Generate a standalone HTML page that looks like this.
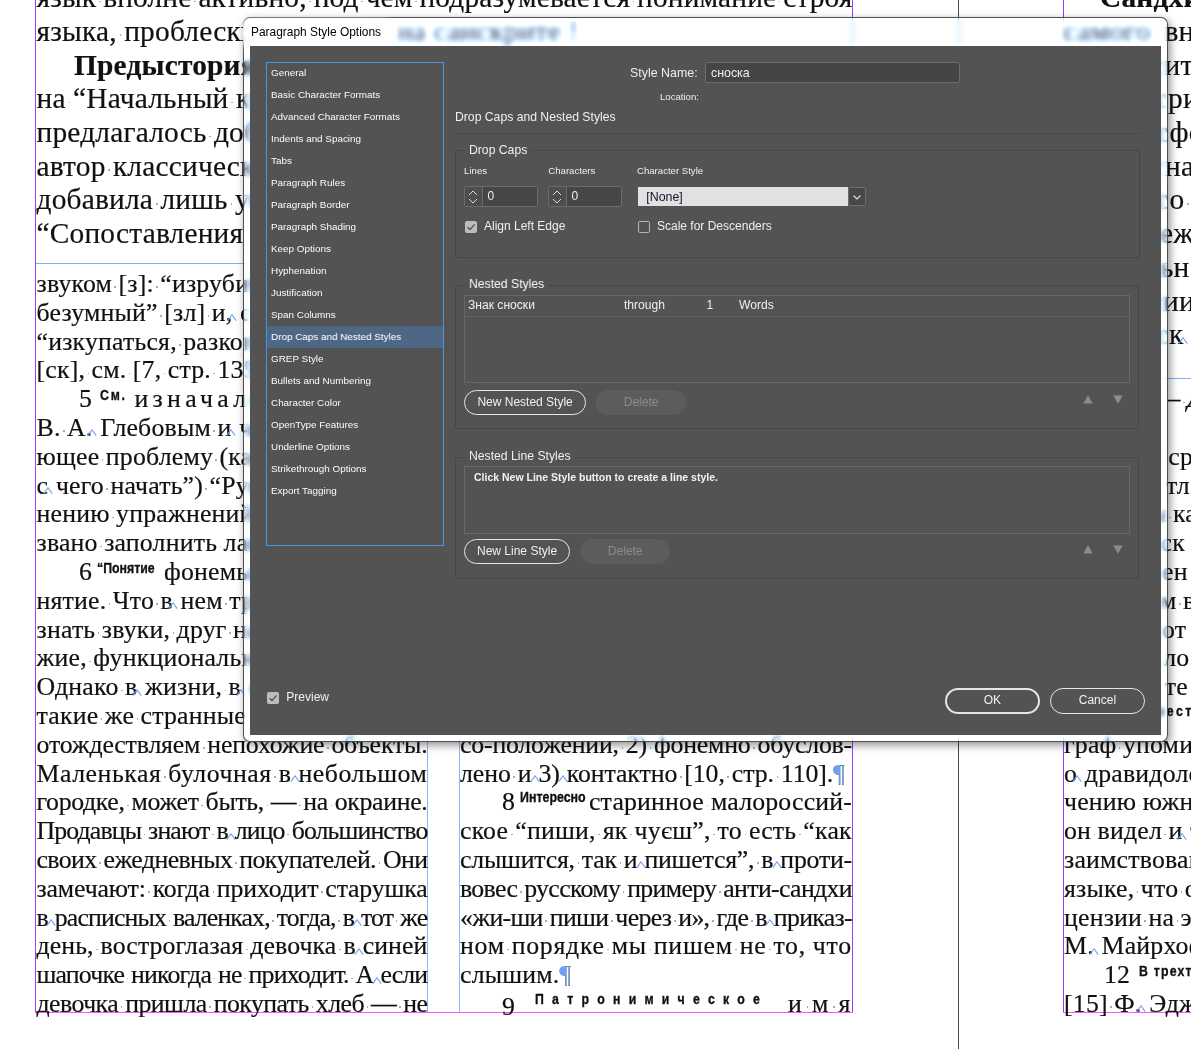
<!DOCTYPE html>
<html><head><meta charset="utf-8"><title>Paragraph Style Options</title>
<style>
html,body{margin:0;padding:0;}
body{width:1191px;height:1049px;overflow:hidden;position:relative;background:#fff;font-family:"Liberation Serif",serif;}
#doc{position:absolute;left:0;top:0;width:1191px;height:1049px;}
.g{position:absolute;}
.t{position:absolute;white-space:nowrap;color:#111;font-family:"Liberation Serif",serif;letter-spacing:0.2px;-webkit-text-stroke:0.2px #111;}
.t b{font-weight:inherit;}
.j{display:flex;justify-content:space-between;}
.t i{display:inline-block;position:relative;font-style:normal;}
.l i{vertical-align:top;height:1em;}
.l i.d{width:0.25em;}
.l i.d::after{left:calc(50% - 0.8px) !important;}
.l i.c{width:0.3em;}
.j i.d,.j i.c{width:0;}
.t i.d::after{content:"";position:absolute;left:-0.8px;top:0.6em;width:1.6px;height:1.6px;background:#86b0f6;}
.t i.c svg{position:absolute;left:-5px;top:0.56em;}
.t u{text-decoration:none;color:#6fa0f5;}
.sup{position:absolute;white-space:nowrap;font-family:"Liberation Sans",sans-serif;font-weight:bold;color:#111;transform-origin:0 0;-webkit-text-stroke:0.35px #111;}
em{font-style:italic;}

/* dialog */
#dlg{position:absolute;left:243px;top:17px;width:925px;height:725px;border-radius:7px;
 background:rgba(255,255,255,0.12);backdrop-filter:blur(3.2px) sepia(0.5) hue-rotate(172deg) contrast(1.05);box-shadow:inset 0 0 0 1px rgba(60,60,60,0.9),2px 3px 9px rgba(0,0,0,0.45);overflow:hidden;}
#glow{position:absolute;left:-10px;top:4px;width:160px;height:24px;background:#fff;filter:blur(5px);border-radius:10px;}
#ttl{position:absolute;left:8px;top:8px;font:11.95px/14px "Liberation Sans",sans-serif;color:#000;white-space:nowrap;}
#in{position:absolute;left:7px;top:29px;width:911px;height:688.5px;background:#535353;font-family:"Liberation Sans",sans-serif;color:#efefef;}
.a{position:absolute;white-space:nowrap;}
#side{position:absolute;left:16px;top:16px;width:178px;height:484px;border:1px solid #4a95e0;box-sizing:border-box;}
#side div{position:absolute;left:4px;height:22px;font-size:9.9px;line-height:22px;color:#fcfcfc;white-space:nowrap;}
#side .sel{left:0;width:176px;background:#4d6784;padding-left:4px;box-sizing:border-box;}
.fld{position:absolute;background:#454545;border:1px solid #6b6b6b;border-radius:2px;box-sizing:border-box;}
.grp{position:absolute;border:1px solid #474747;border-radius:2px;box-sizing:border-box;}
.lgd{position:absolute;background:#535353;padding:0 4px;font-size:12px;line-height:14px;color:#ececec;white-space:nowrap;}
.btn{position:absolute;box-sizing:border-box;border:1.5px solid #e6e6e6;border-radius:13px;font-size:12px;color:#f0f0f0;text-align:center;}
.btn.dis{border:none;background:#5c5c5c;color:#8a8a8a;}
.chk{position:absolute;width:12px;height:12px;border-radius:2px;box-sizing:border-box;}

@supports not ((backdrop-filter: blur(1px)) or (-webkit-backdrop-filter: blur(1px))) { #dlg{background:#fbfdff;} }
.vb{position:absolute;top:3px;width:6px;height:24px;background:rgba(190,232,252,0.3);filter:blur(2px);}

</style></head><body>
<div id="doc">
<div class="g" style="left:35px;top:0;width:1px;height:1013px;background:#9b3cff"></div><div class="g" style="left:852px;top:0;width:1px;height:1013px;background:#9b3cff"></div><div class="g" style="left:958px;top:0;width:1px;height:1049px;background:#4a4a4a"></div><div class="g" style="left:1063px;top:0;width:1px;height:1013px;background:#9b3cff"></div><div class="g" style="left:35px;top:1012px;width:818px;height:1px;background:#ff55ff"></div><div class="g" style="left:1063px;top:1012px;width:128px;height:1px;background:#ff55ff"></div><div class="g" style="left:36px;top:263px;width:816px;height:1px;background:#7fb0f5"></div><div class="g" style="left:427px;top:263px;width:1px;height:749px;background:#8ab8f8"></div><div class="g" style="left:459px;top:263px;width:1px;height:749px;background:#8ab8f8"></div><div class="g" style="left:1064px;top:378px;width:127px;height:1px;background:#7fb0f5"></div><div id="j0" class="t j" style="left:36.5px;top:-17.0px;font-size:29.40px;line-height:29.40px;width:816.0px;letter-spacing:0.138px;"><b>язык</b><i class="d"></i><b>вполне</b><i class="d"></i><b>активно,</b><i class="d"></i><b>под</b><i class="d"></i><b>чем</b><i class="d"></i><b>подразумевается</b><i class="d"></i><b>понимание</b><i class="d"></i><b>строя</b></div>
<div class="t l" style="left:36.5px;top:16.7px;font-size:29.40px;line-height:29.40px;"><b>языка,</b><i class="d"></i><b>проблески</b></div>
<div class="t l" style="left:397.0px;top:16.7px;font-size:29.40px;line-height:29.40px;"><b>на</b><i class="d"></i><b>санскрите</b><i class="d"></i><b>!</b></div>
<div class="t l" style="left:74.0px;top:50.5px;font-size:29.40px;line-height:29.40px;font-weight:bold"><b>Предыстория</b><i class="d"></i><b>вопроса</b></div>
<div class="t l" style="left:36.5px;top:84.2px;font-size:29.40px;line-height:29.40px;"><b>на</b><i class="d"></i><b>“Начальный</b><i class="d"></i><b>курс</b><i class="d"></i><b>фонетики</b><i class="d"></i><b>и</b><i class="d"></i><b>фонологии”</b></div>
<div class="t l" style="left:36.5px;top:117.9px;font-size:29.40px;line-height:29.40px;"><b>предлагалось</b><i class="d"></i><b>добавить</b></div>
<div class="t l" style="left:36.5px;top:151.6px;font-size:29.40px;line-height:29.40px;"><b>автор</b><i class="d"></i><b>классического</b><i class="d"></i><b>курса</b></div>
<div class="t l" style="left:36.5px;top:185.4px;font-size:29.40px;line-height:29.40px;"><b>добавила</b><i class="d"></i><b>лишь</b><i class="d"></i><b>упражнения</b></div>
<div class="t l" style="left:36.5px;top:219.1px;font-size:29.40px;line-height:29.40px;"><b>“Сопоставления</b><i class="d"></i><b>звуков</b></div>
<div class="t l" style="left:36.5px;top:271.0px;font-size:25.80px;line-height:25.80px;"><b>звуком</b><i class="d"></i><b>[з]:</b><i class="d"></i><b>“изрубить”,</b><i class="d"></i><b>“изрезать”</b></div>
<div class="t l" style="left:36.5px;top:299.8px;font-size:25.80px;line-height:25.80px;"><b>безумный”</b><i class="d"></i><b>[зл]</b><i class="d"></i><b>и,</b><i class="c"><svg width="10" height="7" viewBox="0 0 10 7"><path d="M0.8 6.6 L5 0.8 L9.2 6.6" fill="none" stroke="#6fa0f5" stroke-width="1.1"/></svg></i><b>с</b><i class="d"></i><b>другой</b><i class="d"></i><b>стороны</b></div>
<div class="t l" style="left:36.5px;top:328.6px;font-size:25.80px;line-height:25.80px;"><b>“изкупаться,</b><i class="d"></i><b>разкопать”</b><i class="d"></i><b>и</b><i class="d"></i><b>прочее</b></div>
<div class="t l" style="left:36.5px;top:357.4px;font-size:25.80px;line-height:25.80px;"><b>[ск],</b><i class="d"></i><b>см.</b><i class="d"></i><b>[7,</b><i class="d"></i><b>стр.</b><i class="d"></i><b>135]</b><i class="d"></i><b>и</b><i class="d"></i><b>далее</b></div>
<div class="t l" style="left:36.5px;top:415.0px;font-size:25.80px;line-height:25.80px;"><b>В.</b><i class="d"></i><b>А.</b><i class="c"><svg width="10" height="7" viewBox="0 0 10 7"><path d="M0.8 6.6 L5 0.8 L9.2 6.6" fill="none" stroke="#6fa0f5" stroke-width="1.1"/></svg></i><b>Глебовым</b><i class="d"></i><b>и</b><i class="c"><svg width="10" height="7" viewBox="0 0 10 7"><path d="M0.8 6.6 L5 0.8 L9.2 6.6" fill="none" stroke="#6fa0f5" stroke-width="1.1"/></svg></i><b>членом</b><i class="d"></i><b>кафедры</b></div>
<div class="t l" style="left:36.5px;top:443.8px;font-size:25.80px;line-height:25.80px;"><b>ющее</b><i class="d"></i><b>проблему</b><i class="d"></i><b>(как</b><i class="d"></i><b>известно</b></div>
<div class="t l" style="left:36.5px;top:472.6px;font-size:25.80px;line-height:25.80px;"><b>с</b><i class="c"><svg width="10" height="7" viewBox="0 0 10 7"><path d="M0.8 6.6 L5 0.8 L9.2 6.6" fill="none" stroke="#6fa0f5" stroke-width="1.1"/></svg></i><b>чего</b><i class="d"></i><b>начать”)</b><i class="d"></i><b>“Руководство</b></div>
<div class="t l" style="left:36.5px;top:501.4px;font-size:25.80px;line-height:25.80px;"><b>нению</b><i class="d"></i><b>упражнений</b><i class="d"></i><b>по</b><i class="d"></i><b>фонетике</b></div>
<div class="t l" style="left:36.5px;top:530.2px;font-size:25.80px;line-height:25.80px;"><b>звано</b><i class="d"></i><b>заполнить</b><i class="d"></i><b>лакуну</b><i class="d"></i><b>в</b><i class="d"></i><b>этой</b></div>
<div class="t l" style="left:36.5px;top:587.8px;font-size:25.80px;line-height:25.80px;"><b>нятие.</b><i class="d"></i><b>Что</b><i class="d"></i><b>в</b><i class="c"><svg width="10" height="7" viewBox="0 0 10 7"><path d="M0.8 6.6 L5 0.8 L9.2 6.6" fill="none" stroke="#6fa0f5" stroke-width="1.1"/></svg></i><b>нем</b><i class="d"></i><b>требуется</b></div>
<div class="t l" style="left:36.5px;top:616.6px;font-size:25.80px;line-height:25.80px;"><b>знать</b><i class="d"></i><b>звуки,</b><i class="d"></i><b>друг</b><i class="d"></i><b>на</b><i class="d"></i><b>друга</b></div>
<div class="t l" style="left:36.5px;top:645.4px;font-size:25.80px;line-height:25.80px;"><b>жие,</b><i class="d"></i><b>функционально</b><i class="d"></i><b>одинаковые</b></div>
<div class="t l" style="left:36.5px;top:674.2px;font-size:25.80px;line-height:25.80px;"><b>Однако</b><i class="d"></i><b>в</b><i class="c"><svg width="10" height="7" viewBox="0 0 10 7"><path d="M0.8 6.6 L5 0.8 L9.2 6.6" fill="none" stroke="#6fa0f5" stroke-width="1.1"/></svg></i><b>жизни,</b><i class="d"></i><b>в</b><i class="c"><svg width="10" height="7" viewBox="0 0 10 7"><path d="M0.8 6.6 L5 0.8 L9.2 6.6" fill="none" stroke="#6fa0f5" stroke-width="1.1"/></svg></i><b>обществе</b></div>
<div class="t l" style="left:36.5px;top:703.0px;font-size:25.80px;line-height:25.80px;"><b>такие</b><i class="d"></i><b>же</b><i class="d"></i><b>странные</b><i class="d"></i><b>вещи:</b><i class="d"></i><b>мы</b></div>
<div id="j1" class="t j" style="left:36.5px;top:731.8px;font-size:25.80px;line-height:25.80px;width:391.0px;letter-spacing:-0.162px;"><b>отождествляем</b><i class="d"></i><b>непохожие</b><i class="d"></i><b>объекты.</b></div>
<div id="j2" class="t j" style="left:36.5px;top:760.6px;font-size:25.80px;line-height:25.80px;width:391.0px;letter-spacing:0.539px;"><b>Маленькая</b><i class="d"></i><b>булочная</b><i class="d"></i><b>в</b><i class="c"><svg width="10" height="7" viewBox="0 0 10 7"><path d="M0.8 6.6 L5 0.8 L9.2 6.6" fill="none" stroke="#6fa0f5" stroke-width="1.1"/></svg></i><b>небольшом</b></div>
<div id="j3" class="t j" style="left:36.5px;top:789.4px;font-size:25.80px;line-height:25.80px;width:391.0px;letter-spacing:-0.341px;"><b>городке,</b><i class="d"></i><b>может</b><i class="d"></i><b>быть,</b><i class="d"></i><b>—</b><i class="d"></i><b>на</b><i class="d"></i><b>окраине.</b></div>
<div id="j4" class="t j" style="left:36.5px;top:818.2px;font-size:25.80px;line-height:25.80px;width:391.0px;letter-spacing:-0.871px;"><b>Продавцы</b><i class="d"></i><b>знают</b><i class="d"></i><b>в</b><i class="c"><svg width="10" height="7" viewBox="0 0 10 7"><path d="M0.8 6.6 L5 0.8 L9.2 6.6" fill="none" stroke="#6fa0f5" stroke-width="1.1"/></svg></i><b>лицо</b><i class="d"></i><b>большинство</b></div>
<div id="j5" class="t j" style="left:36.5px;top:847.0px;font-size:25.80px;line-height:25.80px;width:391.0px;letter-spacing:-0.587px;"><b>своих</b><i class="d"></i><b>ежедневных</b><i class="d"></i><b>покупателей.</b><i class="d"></i><b>Они</b></div>
<div id="j6" class="t j" style="left:36.5px;top:875.8px;font-size:25.80px;line-height:25.80px;width:391.0px;letter-spacing:-0.159px;"><b>замечают:</b><i class="d"></i><b>когда</b><i class="d"></i><b>приходит</b><i class="d"></i><b>старушка</b></div>
<div id="j7" class="t j" style="left:36.5px;top:904.6px;font-size:25.80px;line-height:25.80px;width:391.0px;letter-spacing:-0.863px;"><b>в</b><i class="c"><svg width="10" height="7" viewBox="0 0 10 7"><path d="M0.8 6.6 L5 0.8 L9.2 6.6" fill="none" stroke="#6fa0f5" stroke-width="1.1"/></svg></i><b>расписных</b><i class="d"></i><b>валенках,</b><i class="d"></i><b>тогда,</b><i class="d"></i><b>в</b><i class="c"><svg width="10" height="7" viewBox="0 0 10 7"><path d="M0.8 6.6 L5 0.8 L9.2 6.6" fill="none" stroke="#6fa0f5" stroke-width="1.1"/></svg></i><b>тот</b><i class="d"></i><b>же</b></div>
<div id="j8" class="t j" style="left:36.5px;top:933.4px;font-size:25.80px;line-height:25.80px;width:391.0px;letter-spacing:0.100px;"><b>день,</b><i class="d"></i><b>востроглазая</b><i class="d"></i><b>девочка</b><i class="d"></i><b>в</b><i class="c"><svg width="10" height="7" viewBox="0 0 10 7"><path d="M0.8 6.6 L5 0.8 L9.2 6.6" fill="none" stroke="#6fa0f5" stroke-width="1.1"/></svg></i><b>синей</b></div>
<div id="j9" class="t j" style="left:36.5px;top:962.2px;font-size:25.80px;line-height:25.80px;width:391.0px;letter-spacing:-0.812px;"><b>шапочке</b><i class="d"></i><b>никогда</b><i class="d"></i><b>не</b><i class="d"></i><b>приходит.</b><i class="d"></i><b>А</b><i class="c"><svg width="10" height="7" viewBox="0 0 10 7"><path d="M0.8 6.6 L5 0.8 L9.2 6.6" fill="none" stroke="#6fa0f5" stroke-width="1.1"/></svg></i><b>если</b></div>
<div id="j10" class="t j" style="left:36.5px;top:991.0px;font-size:25.80px;line-height:25.80px;width:391.0px;letter-spacing:-0.532px;"><b>девочка</b><i class="d"></i><b>пришла</b><i class="d"></i><b>покупать</b><i class="d"></i><b>хлеб</b><i class="d"></i><b>—</b><i class="d"></i><b>не</b></div>
<div class="t l" style="left:79.0px;top:386.2px;font-size:25.80px;line-height:25.80px;">5</div>
<div class="sup" style="left:99.5px;top:387.3px;font-size:15.40px;line-height:15.40px;letter-spacing:2.20px;transform:scaleX(0.800)">См.</div>
<div class="t l" style="left:134.5px;top:386.2px;font-size:25.80px;line-height:25.80px;letter-spacing:4.3px"><b>изначально</b></div>
<div class="t l" style="left:79.0px;top:559.0px;font-size:25.80px;line-height:25.80px;">6</div>
<div class="sup" style="left:96.5px;top:560.1px;font-size:15.40px;line-height:15.40px;letter-spacing:0.00px;transform:scaleX(0.800)">“Понятие</div>
<div class="t l" style="left:164.0px;top:559.0px;font-size:25.80px;line-height:25.80px;"><b>фонемы</b><i class="d"></i><b>очень</b></div>
<div id="j11" class="t j" style="left:460.0px;top:731.8px;font-size:25.80px;line-height:25.80px;width:392.0px;letter-spacing:-0.186px;"><b>со-положении,</b><i class="d"></i><b>2)</b><i class="d"></i><b>фонемно</b><i class="d"></i><b>обуслов-</b></div>
<div id="j12" class="t j" style="left:460.0px;top:760.6px;font-size:25.80px;line-height:25.80px;width:385.0px;letter-spacing:-0.072px;"><b>лено</b><i class="d"></i><b>и</b><i class="c"><svg width="10" height="7" viewBox="0 0 10 7"><path d="M0.8 6.6 L5 0.8 L9.2 6.6" fill="none" stroke="#6fa0f5" stroke-width="1.1"/></svg></i><b>3)</b><i class="c"><svg width="10" height="7" viewBox="0 0 10 7"><path d="M0.8 6.6 L5 0.8 L9.2 6.6" fill="none" stroke="#6fa0f5" stroke-width="1.1"/></svg></i><b>контактно</b><i class="d"></i><b>[10,</b><i class="d"></i><b>стр.</b><i class="d"></i><b>110].<u>¶</u></b></div>
<div id="j13" class="t j" style="left:460.0px;top:818.2px;font-size:25.80px;line-height:25.80px;width:392.0px;letter-spacing:0.226px;"><b>ское</b><i class="d"></i><b>“пиши,</b><i class="d"></i><b>як</b><i class="d"></i><b>чуєш”,</b><i class="d"></i><b>то</b><i class="d"></i><b>есть</b><i class="d"></i><b>“как</b></div>
<div id="j14" class="t j" style="left:460.0px;top:847.0px;font-size:25.80px;line-height:25.80px;width:392.0px;letter-spacing:-0.205px;"><b>слышится,</b><i class="d"></i><b>так</b><i class="d"></i><b>и</b><i class="c"><svg width="10" height="7" viewBox="0 0 10 7"><path d="M0.8 6.6 L5 0.8 L9.2 6.6" fill="none" stroke="#6fa0f5" stroke-width="1.1"/></svg></i><b>пишется”,</b><i class="d"></i><b>в</b><i class="c"><svg width="10" height="7" viewBox="0 0 10 7"><path d="M0.8 6.6 L5 0.8 L9.2 6.6" fill="none" stroke="#6fa0f5" stroke-width="1.1"/></svg></i><b>проти-</b></div>
<div id="j15" class="t j" style="left:460.0px;top:875.8px;font-size:25.80px;line-height:25.80px;width:392.0px;letter-spacing:-0.652px;"><b>вовес</b><i class="d"></i><b>русскому</b><i class="d"></i><b>примеру</b><i class="d"></i><b>анти-сандхи</b></div>
<div id="j16" class="t j" style="left:460.0px;top:904.6px;font-size:25.80px;line-height:25.80px;width:392.0px;letter-spacing:-0.673px;"><b>«жи-ши</b><i class="d"></i><b>пиши</b><i class="d"></i><b>через</b><i class="d"></i><b>и»,</b><i class="d"></i><b>где</b><i class="d"></i><b>в</b><i class="c"><svg width="10" height="7" viewBox="0 0 10 7"><path d="M0.8 6.6 L5 0.8 L9.2 6.6" fill="none" stroke="#6fa0f5" stroke-width="1.1"/></svg></i><b>приказ-</b></div>
<div id="j17" class="t j" style="left:460.0px;top:933.4px;font-size:25.80px;line-height:25.80px;width:392.0px;letter-spacing:0.730px;"><b>ном</b><i class="d"></i><b>порядке</b><i class="d"></i><b>мы</b><i class="d"></i><b>пишем</b><i class="d"></i><b>не</b><i class="d"></i><b>то,</b><i class="d"></i><b>что</b></div>
<div class="t l" style="left:460.0px;top:962.2px;font-size:25.80px;line-height:25.80px;"><b>слышим.<u>¶</u></b></div>
<div class="t l" style="left:502.0px;top:789.4px;font-size:25.80px;line-height:25.80px;">8</div>
<div class="sup" style="left:519.7px;top:789.4px;font-size:15.40px;line-height:15.40px;letter-spacing:0.00px;transform:scaleX(0.806)">Интересно</div>
<div id="j18" class="t j" style="left:589.0px;top:789.4px;font-size:25.80px;line-height:25.80px;width:263.0px;letter-spacing:0.169px;"><b>старинное</b><i class="d"></i><b>малороссий-</b></div>
<div class="t l" style="left:502.0px;top:994.0px;font-size:25.80px;line-height:25.80px;">9</div>
<div class="sup" style="left:535.0px;top:991.1px;font-size:15.40px;line-height:15.40px;letter-spacing:10.30px;transform:scaleX(0.800)">Патронимическое</div>
<div id="j19" class="t j" style="left:788.0px;top:991.0px;font-size:25.80px;line-height:25.80px;width:64.0px;letter-spacing:1.500px;"><b>и</b><i class="d"></i><b>м</b><i class="d"></i><b>я</b></div>
<div class="t l" style="left:1100.0px;top:-17.0px;font-size:29.40px;line-height:29.40px;font-weight:bold"><b>Сандхи</b></div>
<div class="t l" style="left:1064.0px;top:16.7px;font-size:29.40px;line-height:29.40px;"><b>самого</b></div>
<div class="t l" style="left:1164.5px;top:16.7px;font-size:29.40px;line-height:29.40px;"><b>вн</b></div>
<div class="t l" style="left:1164.5px;top:50.5px;font-size:29.40px;line-height:29.40px;"><b>ит</b></div>
<div class="t l" style="right:27.5px;top:50.5px;font-size:29.40px;line-height:29.40px">нос</div>
<div class="t l" style="left:1168.0px;top:84.2px;font-size:29.40px;line-height:29.40px;"><b>ри</b></div>
<div class="t l" style="right:24.0px;top:84.2px;font-size:29.40px;line-height:29.40px">нос</div>
<div class="t l" style="left:1169.5px;top:117.9px;font-size:29.40px;line-height:29.40px;"><b>фо</b></div>
<div class="t l" style="right:22.5px;top:117.9px;font-size:29.40px;line-height:29.40px">нос</div>
<div class="t l" style="left:1165.0px;top:151.6px;font-size:29.40px;line-height:29.40px;"><b>на</b></div>
<div class="t l" style="right:27.0px;top:151.6px;font-size:29.40px;line-height:29.40px">нос</div>
<div class="t l" style="left:1169.5px;top:185.4px;font-size:29.40px;line-height:29.40px;"><b>о</b><i class="d"></i><b>ч</b></div>
<div class="t l" style="right:22.5px;top:185.4px;font-size:29.40px;line-height:29.40px">нос</div>
<div class="t l" style="left:1160.0px;top:219.1px;font-size:29.40px;line-height:29.40px;"><b>еж</b></div>
<div class="t l" style="right:32.0px;top:219.1px;font-size:29.40px;line-height:29.40px">нос</div>
<div class="t l" style="left:1160.0px;top:252.8px;font-size:29.40px;line-height:29.40px;"><b>ьн</b></div>
<div class="t l" style="right:32.0px;top:252.8px;font-size:29.40px;line-height:29.40px">нос</div>
<div class="t l" style="left:1163.0px;top:286.6px;font-size:29.40px;line-height:29.40px;"><b>ии</b></div>
<div class="t l" style="right:29.0px;top:286.6px;font-size:29.40px;line-height:29.40px">нос</div>
<div class="t l" style="left:1169.0px;top:320.3px;font-size:29.40px;line-height:29.40px;"><b>к</b><i class="c"><svg width="10" height="7" viewBox="0 0 10 7"><path d="M0.8 6.6 L5 0.8 L9.2 6.6" fill="none" stroke="#6fa0f5" stroke-width="1.1"/></svg></i><b>с</b></div>
<div class="t l" style="right:23.0px;top:320.3px;font-size:29.40px;line-height:29.40px">нос</div>
<div class="t l" style="left:1167.5px;top:386.2px;font-size:25.80px;line-height:25.80px;"><b>–</b><i class="d"></i><b><em>Д</em></b></div>
<div class="t l" style="right:28.5px;top:386.2px;font-size:25.80px;line-height:25.80px">нос</div>
<div class="t l" style="left:1168.3px;top:443.8px;font-size:25.80px;line-height:25.80px;"><b>ср</b></div>
<div class="t l" style="right:27.7px;top:443.8px;font-size:25.80px;line-height:25.80px">нос</div>
<div class="t l" style="left:1166.0px;top:472.6px;font-size:25.80px;line-height:25.80px;"><b>тл</b></div>
<div class="t l" style="right:30.0px;top:472.6px;font-size:25.80px;line-height:25.80px">нос</div>
<div class="t l" style="left:1149.0px;top:501.4px;font-size:25.80px;line-height:25.80px;"><b>ы</b><i class="d"></i><b>ка</b></div>
<div class="t l" style="right:47.0px;top:501.4px;font-size:25.80px;line-height:25.80px">нос</div>
<div class="t l" style="left:1160.6px;top:530.2px;font-size:25.80px;line-height:25.80px;"><b>ск</b></div>
<div class="t l" style="right:35.4px;top:530.2px;font-size:25.80px;line-height:25.80px">нос</div>
<div class="t l" style="left:1162.0px;top:559.0px;font-size:25.80px;line-height:25.80px;"><b>ен</b></div>
<div class="t l" style="right:34.0px;top:559.0px;font-size:25.80px;line-height:25.80px">нос</div>
<div class="t l" style="left:1160.0px;top:587.8px;font-size:25.80px;line-height:25.80px;"><b>м</b><i class="d"></i><b>в</b></div>
<div class="t l" style="right:36.0px;top:587.8px;font-size:25.80px;line-height:25.80px">нос</div>
<div class="t l" style="left:1162.0px;top:616.6px;font-size:25.80px;line-height:25.80px;"><b>от</b></div>
<div class="t l" style="right:34.0px;top:616.6px;font-size:25.80px;line-height:25.80px">нос</div>
<div class="t l" style="left:1163.3px;top:645.4px;font-size:25.80px;line-height:25.80px;"><b>ло</b></div>
<div class="t l" style="right:32.7px;top:645.4px;font-size:25.80px;line-height:25.80px">нос</div>
<div class="t l" style="left:1164.7px;top:674.2px;font-size:25.80px;line-height:25.80px;"><b>те</b></div>
<div class="t l" style="right:31.3px;top:674.2px;font-size:25.80px;line-height:25.80px">нос</div>
<div class="t l" style="left:1064.0px;top:731.8px;font-size:25.80px;line-height:25.80px;"><b>граф</b><i class="d"></i><b>упоминает</b></div>
<div class="t l" style="left:1064.0px;top:760.6px;font-size:25.80px;line-height:25.80px;"><b>о</b><i class="c"><svg width="10" height="7" viewBox="0 0 10 7"><path d="M0.8 6.6 L5 0.8 L9.2 6.6" fill="none" stroke="#6fa0f5" stroke-width="1.1"/></svg></i><b>дравидологии</b></div>
<div class="t l" style="left:1064.0px;top:789.4px;font-size:25.80px;line-height:25.80px;"><b>чению</b><i class="d"></i><b>южных</b></div>
<div class="t l" style="left:1064.0px;top:818.2px;font-size:25.80px;line-height:25.80px;"><b>он</b><i class="d"></i><b>видел</b><i class="d"></i><b>и</b><i class="c"><svg width="10" height="7" viewBox="0 0 10 7"><path d="M0.8 6.6 L5 0.8 L9.2 6.6" fill="none" stroke="#6fa0f5" stroke-width="1.1"/></svg></i><b>так</b></div>
<div class="t l" style="left:1064.0px;top:847.0px;font-size:25.80px;line-height:25.80px;"><b>заимствования</b></div>
<div class="t l" style="left:1064.0px;top:875.8px;font-size:25.80px;line-height:25.80px;"><b>языке,</b><i class="d"></i><b>что</b><i class="d"></i><b>от</b></div>
<div class="t l" style="left:1064.0px;top:904.6px;font-size:25.80px;line-height:25.80px;"><b>цензии</b><i class="d"></i><b>на</b><i class="d"></i><b>эту</b></div>
<div class="t l" style="left:1064.0px;top:933.4px;font-size:25.80px;line-height:25.80px;"><b>М.</b><i class="c"><svg width="10" height="7" viewBox="0 0 10 7"><path d="M0.8 6.6 L5 0.8 L9.2 6.6" fill="none" stroke="#6fa0f5" stroke-width="1.1"/></svg></i><b>Майрхофер</b></div>
<div class="t l" style="left:1064.0px;top:991.0px;font-size:25.80px;line-height:25.80px;"><b>[15]</b><i class="d"></i><b>Ф.</b><i class="c"><svg width="10" height="7" viewBox="0 0 10 7"><path d="M0.8 6.6 L5 0.8 L9.2 6.6" fill="none" stroke="#6fa0f5" stroke-width="1.1"/></svg></i><b>Эджертон</b></div>
<div class="t l" style="left:1104.0px;top:962.2px;font-size:25.80px;line-height:25.80px;">12</div>
<div class="sup" style="left:1139.0px;top:963.3px;font-size:15.40px;line-height:15.40px;letter-spacing:1.50px;transform:scaleX(0.800)">В трехтомном</div>
<div class="sup" style="left:1155.0px;top:703.0px;font-size:15.40px;line-height:15.40px;letter-spacing:3.20px;transform:scaleX(0.800)">мест</div>

</div>
<div id="dlg"><div id="glow"></div><div class="vb" style="left:607px"></div><div class="vb" style="left:713px"></div><div id="ttl">Paragraph Style Options</div><div id="in"><div id="side" ><div style="top:-0.8px">General</div><div style="top:21.2px">Basic Character Formats</div><div style="top:43.2px">Advanced Character Formats</div><div style="top:65.2px">Indents and Spacing</div><div style="top:87.2px">Tabs</div><div style="top:109.2px">Paragraph Rules</div><div style="top:131.2px">Paragraph Border</div><div style="top:153.2px">Paragraph Shading</div><div style="top:175.2px">Keep Options</div><div style="top:197.2px">Hyphenation</div><div style="top:219.2px">Justification</div><div style="top:241.2px">Span Columns</div><div class="sel" style="top:263.2px">Drop Caps and Nested Styles</div><div style="top:285.2px">GREP Style</div><div style="top:307.2px">Bullets and Numbering</div><div style="top:329.2px">Character Color</div><div style="top:351.2px">OpenType Features</div><div style="top:373.2px">Underline Options</div><div style="top:395.2px">Strikethrough Options</div><div style="top:417.2px">Export Tagging</div></div>
<div class="a" style="left:380.10px;top:19.95px;font-size:12.40px;line-height:15.50px;">Style Name:</div>
<div class="fld" style="left:455.00px;top:16.00px;width:254.50px;height:20.50px;"></div>
<div class="a" style="left:461.00px;top:19.75px;font-size:12.40px;line-height:15.50px;">сноска</div>
<div class="a" style="left:410.00px;top:44.57px;font-size:9.60px;line-height:12.00px;">Location:</div>
<div class="a" style="left:205.00px;top:63.95px;font-size:12.20px;line-height:15.25px;">Drop Caps and Nested Styles</div>
<div class="a" style="left:204.00px;top:87.00px;width:685.50px;height:1.00px;background:#474747"></div>
<div class="grp" style="left:204.50px;top:104.00px;width:685.00px;height:107.50px;"></div>
<div class="a" style="left:215.00px;top:96.75px;font-size:12.20px;line-height:15.25px;background:#535353;padding:0 4px;">Drop Caps</div>
<div class="a" style="left:214.10px;top:118.67px;font-size:9.60px;line-height:12.00px;">Lines</div>
<div class="a" style="left:298.30px;top:118.67px;font-size:9.60px;line-height:12.00px;">Characters</div>
<div class="a" style="left:387.00px;top:118.67px;font-size:9.60px;line-height:12.00px;">Character Style</div>
<div class="fld" style="left:214.30px;top:140.40px;width:73.50px;height:20.20px;background:#464646"></div>
<div class="a" style="left:232.10px;top:141.00px;width:1.00px;height:19.00px;background:#6b6b6b"></div>
<div class="a" style="left:215.30px;top:141.40px;width:16.80px;height:18.20px;background:#4e4e4e"></div>
<svg class="a" style="left:217.20px;top:141.50px" width="12" height="18" viewBox="0 0 12 18"><path d="M2 7 L6 3 L10 7 M2 11 L6 15 L10 11" fill="none" stroke="#d8d8d8" stroke-width="1"/></svg>
<div class="a" style="left:237.50px;top:142.94px;font-size:12.00px;line-height:15.00px;">0</div>
<div class="fld" style="left:298.30px;top:140.40px;width:73.50px;height:20.20px;background:#464646"></div>
<div class="a" style="left:316.10px;top:141.00px;width:1.00px;height:19.00px;background:#6b6b6b"></div>
<div class="a" style="left:299.30px;top:141.40px;width:16.80px;height:18.20px;background:#4e4e4e"></div>
<svg class="a" style="left:301.20px;top:141.50px" width="12" height="18" viewBox="0 0 12 18"><path d="M2 7 L6 3 L10 7 M2 11 L6 15 L10 11" fill="none" stroke="#d8d8d8" stroke-width="1"/></svg>
<div class="a" style="left:321.50px;top:142.94px;font-size:12.00px;line-height:15.00px;">0</div>
<div class="a" style="left:387.60px;top:140.90px;width:210.40px;height:19.50px;background:#e1e1e1"></div>
<div class="fld" style="left:597.50px;top:140.90px;width:18.60px;height:19.50px;background:#484848;border-color:#6e6e6e"></div>
<svg class="a" style="left:602.00px;top:147.00px" width="10" height="8" viewBox="0 0 10 8"><path d="M1.5 2.5 L5 6 L8.5 2.5" fill="none" stroke="#e0e0e0" stroke-width="1.1"/></svg>
<div class="a" style="left:396.30px;top:143.75px;font-size:12.40px;line-height:15.50px;color:#16122a;">[None]</div>
<div class="chk" style="left:215.00px;top:175.00px;width:12.00px;height:12.00px;background:#bdbdbd"></div>
<svg class="a" style="left:215.00px;top:175.00px" width="12" height="12" viewBox="0 0 12 12"><path d="M2.6 6.2 L5 8.6 L9.6 3.4" fill="none" stroke="#505050" stroke-width="1.4"/></svg>
<div class="a" style="left:234.00px;top:173.24px;font-size:12.00px;line-height:15.00px;">Align Left Edge</div>
<div class="chk" style="left:388.30px;top:175.00px;width:11.70px;height:12.00px;border:1px solid #b4b4b4"></div>
<div class="a" style="left:407.00px;top:173.34px;font-size:12.00px;line-height:15.00px;">Scale for Descenders</div>
<div class="grp" style="left:205.00px;top:238.80px;width:684.20px;height:144.00px;"></div>
<div class="a" style="left:215.00px;top:230.65px;font-size:12.20px;line-height:15.25px;background:#535353;padding:0 4px;">Nested Styles</div>
<div class="grp" style="left:214.30px;top:248.70px;width:665.60px;height:88.60px;border-color:#676767;border-radius:0"></div>
<div class="a" style="left:215.00px;top:270.00px;width:664.00px;height:1.00px;background:#636363"></div>
<div class="a" style="left:218.00px;top:252.05px;font-size:12.10px;line-height:15.12px;">Знак сноски</div>
<div class="a" style="left:374.00px;top:252.05px;font-size:12.10px;line-height:15.12px;">through</div>
<div class="a" style="left:456.50px;top:252.05px;font-size:12.10px;line-height:15.12px;">1</div>
<div class="a" style="left:489.00px;top:252.05px;font-size:12.10px;line-height:15.12px;">Words</div>
<div class="btn" style="left:214.30px;top:343.70px;width:121.60px;height:25.10px;line-height:22px">New Nested Style</div>
<div class="btn dis" style="left:346.20px;top:343.70px;width:89.80px;height:25.10px;line-height:25px">Delete</div>
<svg class="a" style="left:832.60px;top:348.50px" width="10" height="9" viewBox="0 0 10 9"><path d="M0.3 8.4 L5 0.3 L9.7 8.4 Z" fill="#8d8d8d"/></svg>
<svg class="a" style="left:862.50px;top:348.50px" width="10" height="9" viewBox="0 0 10 9"><path d="M0.3 0.6 L9.7 0.6 L5 8.7 Z" fill="#8d8d8d"/></svg>
<div class="grp" style="left:205.00px;top:410.60px;width:684.20px;height:122.40px;"></div>
<div class="a" style="left:215.00px;top:403.15px;font-size:12.20px;line-height:15.25px;background:#535353;padding:0 4px;">Nested Line Styles</div>
<div class="grp" style="left:214.30px;top:420.30px;width:665.60px;height:67.30px;border-color:#676767;border-radius:0"></div>
<div class="a" style="left:224.00px;top:424.60px;font-size:10.50px;line-height:13.12px;color:#f2f2f2;font-weight:bold;">Click New Line Style button to create a line style.</div>
<div class="btn" style="left:214.30px;top:493.40px;width:105.50px;height:25.10px;line-height:22px">New Line Style</div>
<div class="btn dis" style="left:330.10px;top:493.40px;width:90.10px;height:25.10px;line-height:25px">Delete</div>
<svg class="a" style="left:832.60px;top:498.50px" width="10" height="9" viewBox="0 0 10 9"><path d="M0.3 8.4 L5 0.3 L9.7 8.4 Z" fill="#8d8d8d"/></svg>
<svg class="a" style="left:862.50px;top:498.50px" width="10" height="9" viewBox="0 0 10 9"><path d="M0.3 0.6 L9.7 0.6 L5 8.7 Z" fill="#8d8d8d"/></svg>
<div class="chk" style="left:17.00px;top:646.20px;width:12.00px;height:11.80px;background:#bdbdbd"></div>
<svg class="a" style="left:17.00px;top:646.20px" width="12" height="12" viewBox="0 0 12 12"><path d="M2.6 6.2 L5 8.6 L9.6 3.4" fill="none" stroke="#505050" stroke-width="1.4"/></svg>
<div class="a" style="left:36.30px;top:644.34px;font-size:12.00px;line-height:15.00px;">Preview</div>
<div class="btn" style="left:695.10px;top:642.10px;width:94.70px;height:25.60px;border-width:2px;line-height:21.6px">OK</div>
<div class="btn" style="left:799.90px;top:642.10px;width:95.10px;height:25.60px;border-width:1.3px;line-height:23px">Cancel</div>
</div></div>
</body></html>
